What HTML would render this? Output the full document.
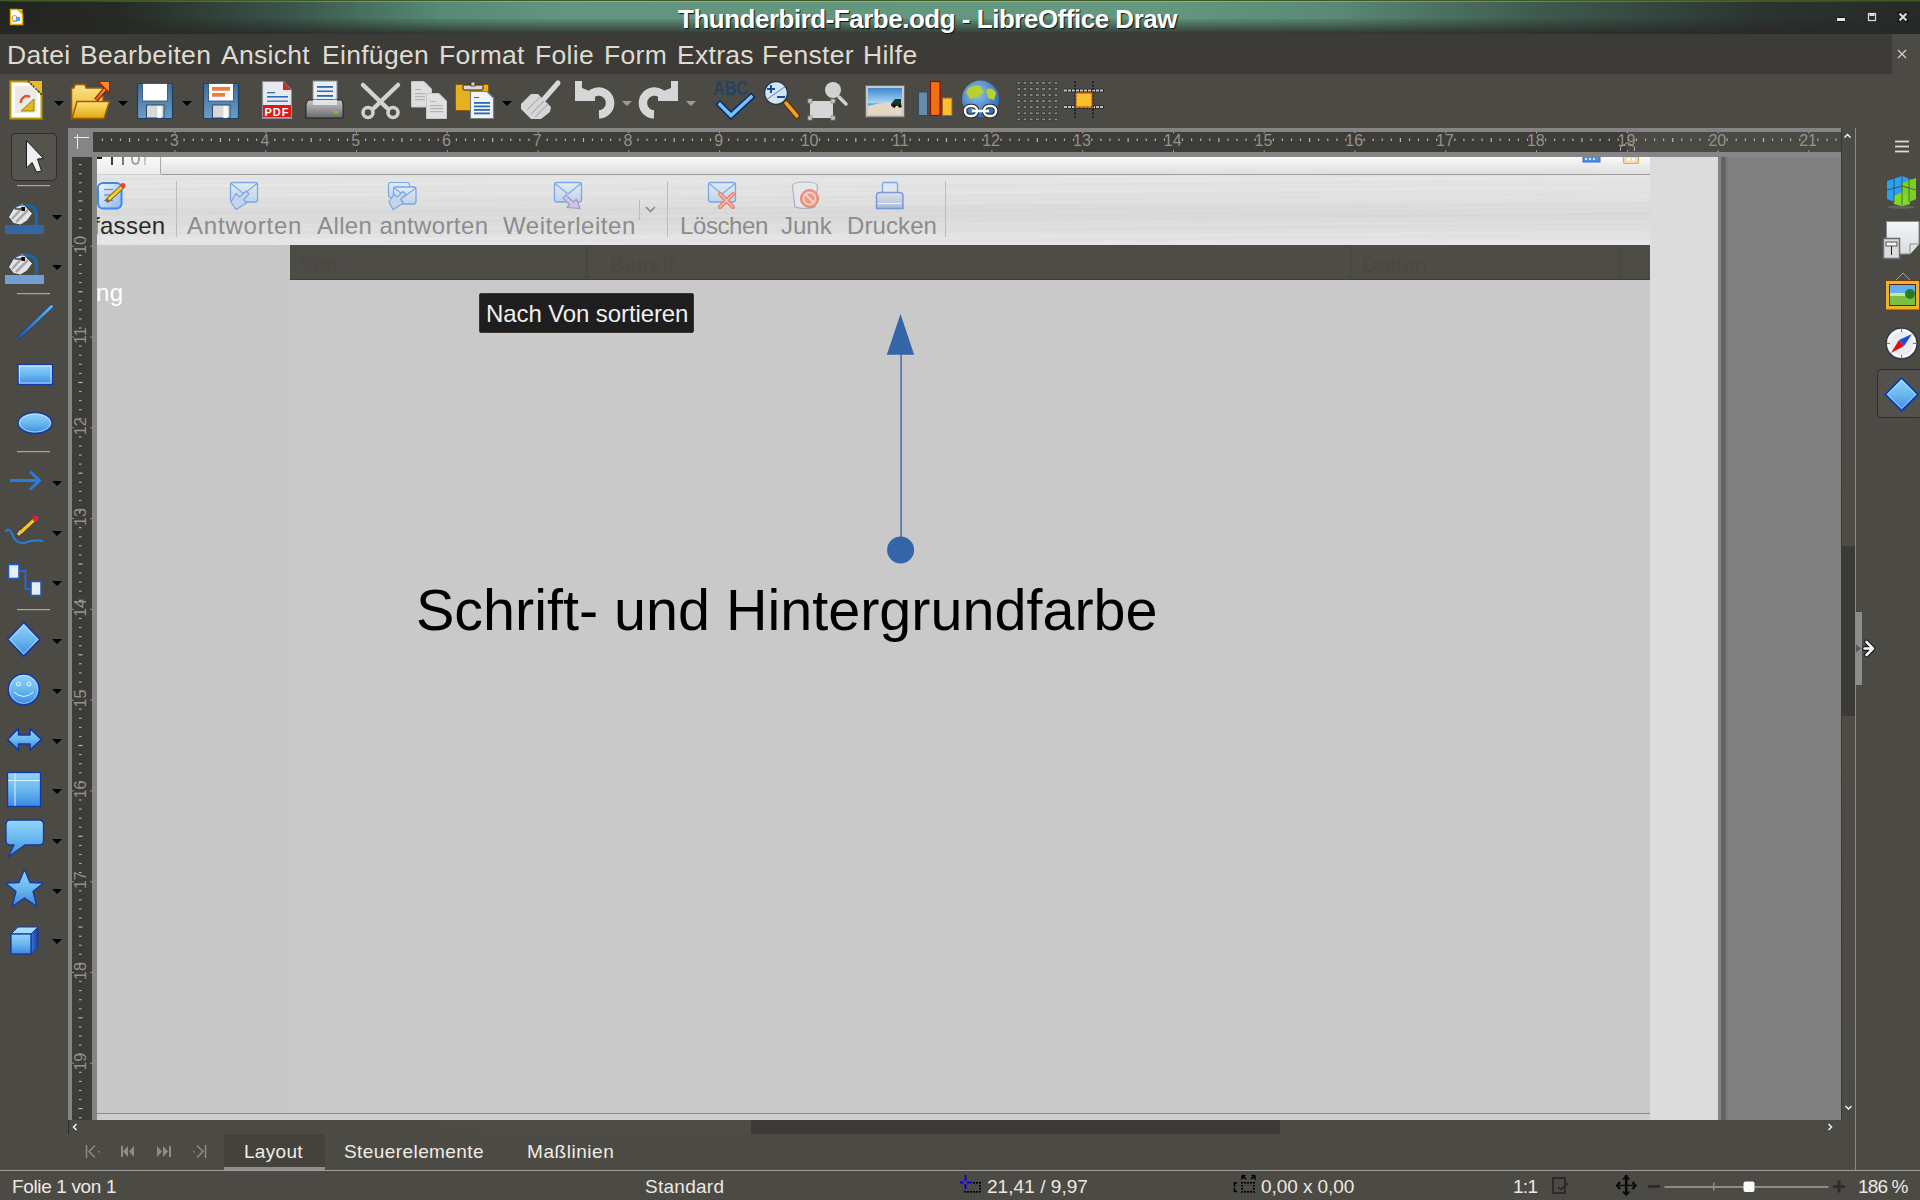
<!DOCTYPE html>
<html><head><meta charset="utf-8">
<style>
*{box-sizing:border-box}
html,body{margin:0;padding:0}
body{width:1920px;height:1200px;overflow:hidden;position:relative;background:#4c4a45;font-family:"Liberation Sans",sans-serif}
.a{position:absolute}
.t{position:absolute;white-space:pre;line-height:1}
#title{left:0;top:0;width:1920px;height:34px;
 background:linear-gradient(90deg,#222420 0px,#262a26 120px,#3a554a 290px,#558a74 440px,#62957f 560px,#64987f 1150px,#5a8a76 1330px,#3e5a4e 1540px,#2c3430 1760px,#262a28 1920px)}
#title .shade{left:0;top:19px;width:1920px;height:15px;background:linear-gradient(180deg,rgba(30,30,30,0.08),rgba(40,40,38,0.85))}
#title .top1{left:0;top:0;width:1920px;height:1px;background:#3f5a20}
#title .top2{left:0;top:1px;width:1920px;height:1px;background:linear-gradient(90deg,rgba(150,170,160,0.1),rgba(150,175,165,0.8) 600px,rgba(150,175,165,0.8) 1200px,rgba(150,170,160,0.1))}
#menubar{left:0;top:34px;width:1892px;height:40px;background:#3c3b37}
.menu{top:42px;font-size:26.5px;letter-spacing:0.3px;color:#dfdbd2}
#toolbar{left:0;top:74px;width:1920px;height:54px;background:#4c4a45}
#frame{left:68px;top:128px;width:1773px;height:992px;background:#858585}
#hruler{left:93px;top:132px;width:1748px;height:20px;background:#3d3c38}
#vruler{left:72px;top:157px;width:20px;height:963px;background:#3d3c38}
#page{left:97px;top:157px;width:1744px;height:963px;background:#808080;overflow:hidden}
#vscroll{left:1841px;top:128px;width:14px;height:992px;background:linear-gradient(180deg,#4c4a45,#4f4b45 40%,#4f4b45 60%,#4c4a45)}
#sep{left:1855px;top:128px;width:1px;height:1042px;background:#8d8a83}
#hscroll{left:68px;top:1120px;width:1773px;height:14px;background:linear-gradient(90deg,#4c4a45,#4f4b44 40%,#4d4a44 70%,#4c4a45)}
#tabbar{left:0;top:1134px;width:1920px;height:36px;background:#4c4a45}
#statusline{left:0;top:1170px;width:1920px;height:1px;background:#a09d96}
#status{left:0;top:1171px;width:1920px;height:29px;background:#4c4a45}
.tbt{top:214px;font-size:24px;letter-spacing:0.4px;color:#8c8c8c}
.st{top:1177px;font-size:19px;color:#ece8e0}
.tab{top:1142px;font-size:19px;color:#f0ece4}
</style></head><body>

<!-- TITLE BAR -->
<div id="title" class="a">
 <div class="a top1"></div><div class="a top2"></div><div class="a shade"></div>
</div>
<div class="t" style="left:678px;top:6px;font-size:26px;letter-spacing:-0.49px;font-weight:bold;color:#fff;text-shadow:1px 1px 1px #111">Thunderbird-Farbe.odg - LibreOffice Draw</div>

<!-- MENU -->
<div id="menubar" class="a"></div>
<div class="t menu" style="left:7px">Datei</div>
<div class="t menu" style="left:80px">Bearbeiten</div>
<div class="t menu" style="left:221px">Ansicht</div>
<div class="t menu" style="left:322px">Einfügen</div>
<div class="t menu" style="left:439px">Format</div>
<div class="t menu" style="left:535px">Folie</div>
<div class="t menu" style="left:604px">Form</div>
<div class="t menu" style="left:677px">Extras</div>
<div class="t menu" style="left:762px">Fenster</div>
<div class="t menu" style="left:863px">Hilfe</div>

<!-- TOOLBAR -->
<div id="toolbar" class="a"></div>
<svg class="a" style="left:0;top:74px" width="1120" height="54" viewBox="0 74 1120 54">
<defs>
 <linearGradient id="gGold" x1="0" y1="0" x2="0" y2="1"><stop offset="0" stop-color="#ffe27a"/><stop offset="1" stop-color="#e0a810"/></linearGradient>
 <linearGradient id="gFold" x1="0" y1="0" x2="0" y2="1"><stop offset="0" stop-color="#fde48a"/><stop offset="1" stop-color="#e8b020"/></linearGradient>
 <linearGradient id="gSave" x1="0" y1="0" x2="0" y2="1"><stop offset="0" stop-color="#3f6f9c"/><stop offset="1" stop-color="#6a9cc8"/></linearGradient>
 <linearGradient id="gOr" x1="0" y1="0" x2="0" y2="1"><stop offset="0" stop-color="#ffa050"/><stop offset="1" stop-color="#e05a00"/></linearGradient>
 <linearGradient id="gSky" x1="0" y1="0" x2="0" y2="1"><stop offset="0" stop-color="#3a88d0"/><stop offset="0.55" stop-color="#a8d4f4"/><stop offset="0.6" stop-color="#48a8e0"/><stop offset="1" stop-color="#e8dcc8"/></linearGradient>
 <radialGradient id="gGlobe" cx="0.4" cy="0.35" r="0.7"><stop offset="0" stop-color="#8cc4f0"/><stop offset="1" stop-color="#2a64b0"/></radialGradient>
 <linearGradient id="gPr" x1="0" y1="0" x2="0" y2="1"><stop offset="0" stop-color="#c8c8c8"/><stop offset="1" stop-color="#6a6a6a"/></linearGradient>
</defs>
<!-- 1 Draw doc -->
<path d="M10.5 81.5 H29 L41.5 94 V118.5 H10.5 Z" fill="#fff" stroke="#c09a00" stroke-width="2"/>
<rect x="15" y="86" width="22" height="27" fill="#eceae6"/>
<path d="M29 81 L42 81 L42 94 Z" fill="#e8bc20"/>
<path d="M28 81 L42 95" stroke="#403a20" stroke-width="1.5" stroke-dasharray="2 1.5"/>
<path d="M21 103 A6 6 0 0 1 30 97" stroke="#d06030" stroke-width="2.5" fill="none"/>
<path d="M21 111 L34 99 V111 Z" fill="#e0b820" stroke="#a08000" stroke-width="1"/>
<path d="M54 101 H64 L59 106 Z" fill="#000"/>
<!-- 2 Open -->
<path d="M71.5 88 H74 L75 84.5 H85 L86 88 H103 V118.5 H71.5 Z" fill="url(#gFold)" stroke="#a05a00" stroke-width="1.5"/>
<path d="M77 101.5 H109.5 L104 118.5 H72 Z" fill="url(#gGold)" stroke="#a05a00" stroke-width="1.5"/>
<path d="M96 100 L106 88" stroke="#7a1a00" stroke-width="4.5"/>
<path d="M96 100 L106 88" stroke="url(#gOr)" stroke-width="2.5"/>
<path d="M98 81.5 H109.5 V93 Z" fill="#ff8a30" stroke="#a01800" stroke-width="1.2"/>
<path d="M118 101 H128 L123 106 Z" fill="#000"/>
<!-- 3 Save -->
<rect x="137.5" y="83.5" width="35" height="35" rx="1.5" fill="url(#gSave)" stroke="#1e3e60" stroke-width="1.2"/>
<rect x="142.5" y="83.5" width="25" height="17.5" fill="#fff" stroke="#2a4a6a" stroke-width="0.8"/>
<rect x="146.5" y="105" width="17.5" height="13" fill="#d8d8d8" stroke="#2a4a6a" stroke-width="1"/>
<rect x="157.5" y="106" width="4" height="12" fill="#fff"/>
<path d="M182 101 H192 L187 106 Z" fill="#000"/>
<!-- 4 Save as -->
<rect x="203.5" y="83.5" width="35" height="35" rx="1.5" fill="url(#gSave)" stroke="#1e3e60" stroke-width="1.2"/>
<rect x="208.5" y="83.5" width="25" height="17.5" fill="#fff" stroke="#2a4a6a" stroke-width="0.8"/>
<rect x="212" y="87" width="18" height="2.5" fill="#f08020"/><rect x="212" y="89.5" width="18" height="1" fill="#e03030"/>
<rect x="212" y="93" width="13" height="2.5" fill="#f08020"/><rect x="212" y="95.5" width="13" height="1" fill="#e03030"/>
<rect x="212.5" y="105" width="17.5" height="13" fill="#d8d8d8" stroke="#2a4a6a" stroke-width="1"/>
<rect x="223.5" y="106" width="4" height="12" fill="#fff"/>
<!-- 5 PDF -->
<path d="M262.5 81.5 H283 L291.5 90 V118.5 H262.5 Z" fill="#e6eaee" stroke="#8a9098" stroke-width="1.2"/>
<path d="M283 81.5 L291.5 90 H283 Z" fill="#e02020"/>
<rect x="267" y="92" width="8" height="1.3" fill="#3070b0"/>
<rect x="267" y="96" width="21" height="1.6" fill="#3070b0"/>
<rect x="267" y="100.5" width="21" height="1.3" fill="#3070b0"/>
<rect x="263" y="105" width="28" height="12.5" fill="#e01818"/>
<text x="277" y="116" font-family="Liberation Sans" font-weight="bold" font-size="11" fill="#fff" text-anchor="middle" letter-spacing="1">PDF</text>
<!-- 6 Print -->
<rect x="313" y="81" width="24" height="23" fill="#e8eef4" stroke="#8a9098" stroke-width="1"/>
<rect x="317" y="86" width="16" height="1.8" fill="#2a6ab0"/>
<rect x="317" y="90.5" width="16" height="1.5" fill="#2a6ab0"/>
<rect x="317" y="95" width="16" height="1.8" fill="#2a6ab0"/>
<rect x="317" y="99.5" width="16" height="1.5" fill="#2a6ab0"/>
<path d="M306 104 L308 100 H342 L343 104 V118 H306 Z" fill="url(#gPr)" stroke="#202020" stroke-width="1"/>
<rect x="313" y="100" width="24" height="5" fill="#e0e4e8"/>
<rect x="334" y="111" width="4" height="2.5" fill="#6ad020"/>
<!-- 7 Cut (disabled) -->
<g stroke="#d2d2d2" fill="none" stroke-linecap="round">
<path d="M363 85 L387 108" stroke-width="4.5"/><path d="M398 85 L374 108" stroke-width="4.5"/>
<circle cx="368" cy="112.5" r="5" stroke-width="3.6"/><circle cx="393" cy="112.5" r="5" stroke-width="3.6"/>
</g>
<!-- 8 Copy -->
<path d="M411.5 81.5 H424 L431.5 89 V107 H411.5 Z" fill="#dedede" stroke="#c8c8c8" stroke-width="1"/>
<path d="M426.5 93.5 H439 L446.5 101 V118.5 H426.5 Z" fill="#e0e0e0" stroke="#c8c8c8" stroke-width="1"/>
<g fill="#b4b4b4"><rect x="415" y="89" width="6" height="1"/><rect x="415" y="93" width="10" height="1.2"/><rect x="415" y="96" width="10" height="1.2"/><rect x="415" y="99" width="10" height="1.2"/>
<rect x="430" y="101" width="6" height="1"/><rect x="430" y="105" width="13" height="1.2"/><rect x="430" y="108" width="13" height="1.2"/><rect x="430" y="111" width="13" height="1.2"/></g>
<!-- 9 Paste -->
<rect x="455.5" y="84.5" width="33" height="26" rx="1" fill="#e6b020" stroke="#8a5a00" stroke-width="1"/>
<rect x="463" y="85" width="20" height="5" rx="1" fill="#d8d8d8" stroke="#202020" stroke-width="1"/>
<rect x="471" y="82" width="4" height="4" fill="#d0d0d0" stroke="#303030" stroke-width="0.8"/>
<path d="M470.5 91.5 H487 L493.5 98 V118.5 H470.5 Z" fill="#f0f4f8" stroke="#7a8088" stroke-width="1.2"/>
<g fill="#2a6ab0"><rect x="474" y="97" width="5" height="1"/><rect x="474" y="102" width="16" height="1.8"/><rect x="474" y="105.5" width="16" height="1.8"/><rect x="474" y="109" width="16" height="1.8"/><rect x="474" y="112.5" width="16" height="1.8"/></g>
<path d="M502 101 H512 L507 106 Z" fill="#000"/>
<!-- 10 Clone brush -->
<path d="M558 83 L544 99" stroke="#d8d8d8" stroke-width="5" stroke-linecap="round"/>
<path d="M521 104 L531 94 L538 94 L551 107 L550 112 L541 119 L531 119 L521 109 Z" fill="#d6d6d6"/>
<g stroke="#b4b4b4" stroke-width="1.2"><path d="M527 110 L540 97"/><path d="M531 114 L544 101"/><path d="M535 117 L548 104"/></g>
<!-- 11 Undo (disabled) -->
<g id="undoG">
<path d="M575 81 H582 V94 H595 V101 H575 Z" fill="#d6d6d6"/>
<path d="M587.5 100 A 11.5 11.5 0 1 1 599 114.5" stroke="#d6d6d6" stroke-width="8.5" fill="none"/><path d="M582 88 L592 92 L590 97 L582 97 Z" fill="#d6d6d6"/>
</g>
<path d="M622 101 H632 L627 106 Z" fill="#a09d96"/>
<!-- 12 Redo (disabled) -->
<g transform="translate(1253,0) scale(-1,1)">
<path d="M575 81 H582 V94 H595 V101 H575 Z" fill="#d6d6d6"/>
<path d="M587.5 100 A 11.5 11.5 0 1 1 599 114.5" stroke="#d6d6d6" stroke-width="8.5" fill="none"/><path d="M582 88 L592 92 L590 97 L582 97 Z" fill="#d6d6d6"/>
</g>
<path d="M686 101 H696 L691 106 Z" fill="#a09d96"/>
<!-- 13 Spell -->
<text x="730.5" y="95" font-family="Liberation Sans" font-weight="bold" font-size="19.5" fill="#27425c" text-anchor="middle" textLength="35" lengthAdjust="spacingAndGlyphs">ABC</text>
<path d="M720 104.5 L731 115.5 L751 97" stroke="#0a2a6a" stroke-width="6.5" fill="none" stroke-linejoin="miter" stroke-linecap="square"/>
<path d="M720 104.5 L731 115.5 L751 97" stroke="#78c0f8" stroke-width="3.5" fill="none" stroke-linejoin="miter" stroke-linecap="square"/>
<!-- 14 Zoom -->
<path d="M786 103 L797 116" stroke="#603000" stroke-width="6" stroke-linecap="round"/>
<path d="M786 103 L797 116" stroke="#f0a030" stroke-width="3.5" stroke-linecap="round"/>
<circle cx="776" cy="93" r="11.5" fill="#d0e6f8" stroke="#303840" stroke-width="1.5"/>
<path d="M766 100 L786 86" stroke="#506070" stroke-width="0.8"/>
<path d="M767 89 H775 M771 85 V93" stroke="#1a4a9a" stroke-width="2"/>
<path d="M777 97 H785" stroke="#1a4a9a" stroke-width="2"/>
<!-- 15 Zoom-select (disabled) -->
<rect x="810" y="101" width="23" height="17" fill="#d6d6d6"/>
<g fill="#c8c8c8" stroke="#8a8a8a" stroke-width="0.8"><rect x="808" y="99" width="4" height="4"/><rect x="831" y="99" width="4" height="4"/><rect x="808" y="116" width="4" height="4"/><rect x="831" y="116" width="4" height="4"/></g>
<path d="M839 97 L846 104" stroke="#d0d0d0" stroke-width="3.5" stroke-linecap="round"/>
<circle cx="833" cy="90" r="8" fill="#d2d2d2"/>
<!-- 16 Image -->
<rect x="865.5" y="85.5" width="39" height="31.5" fill="#c8c8c8" stroke="#6a6a6a" stroke-width="1"/>
<rect x="868" y="88" width="34" height="26.5" fill="url(#gSky)"/>
<path d="M868 106 Q 885 100 902 104 V114.5 H868 Z" fill="#e6d6c4"/>
<path d="M891 104 L895 99 H901 V106 H891 Z" fill="#103a28"/>
<circle cx="894" cy="106" r="1.8" fill="#101010"/><circle cx="900" cy="106" r="1.8" fill="#101010"/>
<!-- 17 Chart -->
<path d="M913.5 81 V118.5 H952" stroke="#3a4a5a" stroke-width="1" fill="none"/>
<rect x="918.5" y="92" width="9" height="23.5" fill="#6a8aaa" stroke="#2a4a6a" stroke-width="1"/>
<rect x="930.5" y="81.5" width="9.5" height="34" fill="#f07010" stroke="#8a1010" stroke-width="1.2"/>
<rect x="942.5" y="98" width="9.5" height="17.5" fill="#f8c030" stroke="#b06010" stroke-width="1"/>
<!-- 18 Globe link -->
<circle cx="980.5" cy="99" r="18.5" fill="url(#gGlobe)"/>
<path d="M966 92 Q 970 84 980 86 L984 92 L978 97 L970 99 Z" fill="#b8d030"/>
<path d="M986 90 Q 992 86 996 93 L994 100 L988 98 Z" fill="#b8d030"/>
<path d="M970 103 L976 108 L972 112 Z" fill="#a0c030"/>
<g fill="none" stroke="#202830" stroke-width="4.5"><rect x="965" y="106" width="12" height="10" rx="5"/><rect x="984" y="106" width="12" height="10" rx="5"/></g>
<g fill="none" stroke="#ffffff" stroke-width="2.5"><rect x="965" y="106" width="12" height="10" rx="5"/><rect x="984" y="106" width="12" height="10" rx="5"/><path d="M972 111 H989"/></g>
<!-- 19 Grid -->
<g><rect x="1017.0" y="81.5" width="3.6" height="2.6" fill="#8c8c8c" stroke="#353535" stroke-width="0.8"/><rect x="1017.0" y="87.6" width="3.6" height="2.6" fill="#8c8c8c" stroke="#353535" stroke-width="0.8"/><rect x="1017.0" y="93.7" width="3.6" height="2.6" fill="#8c8c8c" stroke="#353535" stroke-width="0.8"/><rect x="1017.0" y="99.8" width="3.6" height="2.6" fill="#8c8c8c" stroke="#353535" stroke-width="0.8"/><rect x="1017.0" y="105.9" width="3.6" height="2.6" fill="#8c8c8c" stroke="#353535" stroke-width="0.8"/><rect x="1017.0" y="112.0" width="3.6" height="2.6" fill="#8c8c8c" stroke="#353535" stroke-width="0.8"/><rect x="1017.0" y="118.1" width="3.6" height="2.6" fill="#8c8c8c" stroke="#353535" stroke-width="0.8"/><rect x="1023.2" y="81.5" width="3.6" height="2.6" fill="#8c8c8c" stroke="#353535" stroke-width="0.8"/><rect x="1023.2" y="87.6" width="3.6" height="2.6" fill="#8c8c8c" stroke="#353535" stroke-width="0.8"/><rect x="1023.2" y="93.7" width="3.6" height="2.6" fill="#8c8c8c" stroke="#353535" stroke-width="0.8"/><rect x="1023.2" y="99.8" width="3.6" height="2.6" fill="#8c8c8c" stroke="#353535" stroke-width="0.8"/><rect x="1023.2" y="105.9" width="3.6" height="2.6" fill="#8c8c8c" stroke="#353535" stroke-width="0.8"/><rect x="1023.2" y="112.0" width="3.6" height="2.6" fill="#8c8c8c" stroke="#353535" stroke-width="0.8"/><rect x="1023.2" y="118.1" width="3.6" height="2.6" fill="#8c8c8c" stroke="#353535" stroke-width="0.8"/><rect x="1029.4" y="81.5" width="3.6" height="2.6" fill="#8c8c8c" stroke="#353535" stroke-width="0.8"/><rect x="1029.4" y="87.6" width="3.6" height="2.6" fill="#8c8c8c" stroke="#353535" stroke-width="0.8"/><rect x="1029.4" y="93.7" width="3.6" height="2.6" fill="#8c8c8c" stroke="#353535" stroke-width="0.8"/><rect x="1029.4" y="99.8" width="3.6" height="2.6" fill="#8c8c8c" stroke="#353535" stroke-width="0.8"/><rect x="1029.4" y="105.9" width="3.6" height="2.6" fill="#8c8c8c" stroke="#353535" stroke-width="0.8"/><rect x="1029.4" y="112.0" width="3.6" height="2.6" fill="#8c8c8c" stroke="#353535" stroke-width="0.8"/><rect x="1029.4" y="118.1" width="3.6" height="2.6" fill="#8c8c8c" stroke="#353535" stroke-width="0.8"/><rect x="1035.6" y="81.5" width="3.6" height="2.6" fill="#8c8c8c" stroke="#353535" stroke-width="0.8"/><rect x="1035.6" y="87.6" width="3.6" height="2.6" fill="#8c8c8c" stroke="#353535" stroke-width="0.8"/><rect x="1035.6" y="93.7" width="3.6" height="2.6" fill="#8c8c8c" stroke="#353535" stroke-width="0.8"/><rect x="1035.6" y="99.8" width="3.6" height="2.6" fill="#8c8c8c" stroke="#353535" stroke-width="0.8"/><rect x="1035.6" y="105.9" width="3.6" height="2.6" fill="#8c8c8c" stroke="#353535" stroke-width="0.8"/><rect x="1035.6" y="112.0" width="3.6" height="2.6" fill="#8c8c8c" stroke="#353535" stroke-width="0.8"/><rect x="1035.6" y="118.1" width="3.6" height="2.6" fill="#8c8c8c" stroke="#353535" stroke-width="0.8"/><rect x="1041.8" y="81.5" width="3.6" height="2.6" fill="#8c8c8c" stroke="#353535" stroke-width="0.8"/><rect x="1041.8" y="87.6" width="3.6" height="2.6" fill="#8c8c8c" stroke="#353535" stroke-width="0.8"/><rect x="1041.8" y="93.7" width="3.6" height="2.6" fill="#8c8c8c" stroke="#353535" stroke-width="0.8"/><rect x="1041.8" y="99.8" width="3.6" height="2.6" fill="#8c8c8c" stroke="#353535" stroke-width="0.8"/><rect x="1041.8" y="105.9" width="3.6" height="2.6" fill="#8c8c8c" stroke="#353535" stroke-width="0.8"/><rect x="1041.8" y="112.0" width="3.6" height="2.6" fill="#8c8c8c" stroke="#353535" stroke-width="0.8"/><rect x="1041.8" y="118.1" width="3.6" height="2.6" fill="#8c8c8c" stroke="#353535" stroke-width="0.8"/><rect x="1048.0" y="81.5" width="3.6" height="2.6" fill="#8c8c8c" stroke="#353535" stroke-width="0.8"/><rect x="1048.0" y="87.6" width="3.6" height="2.6" fill="#8c8c8c" stroke="#353535" stroke-width="0.8"/><rect x="1048.0" y="93.7" width="3.6" height="2.6" fill="#8c8c8c" stroke="#353535" stroke-width="0.8"/><rect x="1048.0" y="99.8" width="3.6" height="2.6" fill="#8c8c8c" stroke="#353535" stroke-width="0.8"/><rect x="1048.0" y="105.9" width="3.6" height="2.6" fill="#8c8c8c" stroke="#353535" stroke-width="0.8"/><rect x="1048.0" y="112.0" width="3.6" height="2.6" fill="#8c8c8c" stroke="#353535" stroke-width="0.8"/><rect x="1048.0" y="118.1" width="3.6" height="2.6" fill="#8c8c8c" stroke="#353535" stroke-width="0.8"/><rect x="1054.2" y="81.5" width="3.6" height="2.6" fill="#8c8c8c" stroke="#353535" stroke-width="0.8"/><rect x="1054.2" y="87.6" width="3.6" height="2.6" fill="#8c8c8c" stroke="#353535" stroke-width="0.8"/><rect x="1054.2" y="93.7" width="3.6" height="2.6" fill="#8c8c8c" stroke="#353535" stroke-width="0.8"/><rect x="1054.2" y="99.8" width="3.6" height="2.6" fill="#8c8c8c" stroke="#353535" stroke-width="0.8"/><rect x="1054.2" y="105.9" width="3.6" height="2.6" fill="#8c8c8c" stroke="#353535" stroke-width="0.8"/><rect x="1054.2" y="112.0" width="3.6" height="2.6" fill="#8c8c8c" stroke="#353535" stroke-width="0.8"/><rect x="1054.2" y="118.1" width="3.6" height="2.6" fill="#8c8c8c" stroke="#353535" stroke-width="0.8"/></g>
<!-- 20 Snap -->
<g stroke="#2a2a2a" stroke-width="3.5"><path d="M1064 90.5 H1104"/><path d="M1064 107 H1104"/></g><g stroke="#c0c0c0" stroke-width="2" stroke-dasharray="3 1"><path d="M1064 90.5 H1104"/><path d="M1064 107 H1104"/></g>
<g stroke="#1a2a3a" stroke-width="2" stroke-dasharray="2 1.5"><path d="M1075 81 V119"/><path d="M1093 81 V119"/></g>
<rect x="1076" y="93" width="16" height="14" fill="#f8c030" stroke="#c05a00" stroke-width="1.2"/>
</svg>


<!-- LEFT TOOLBAR -->
<svg class="a" style="left:0;top:128px" width="68" height="840" viewBox="0 128 68 840">
<defs>
 <linearGradient id="gB" x1="0" y1="0" x2="0" y2="1"><stop offset="0" stop-color="#94d4fa"/><stop offset="0.5" stop-color="#6ab8ee"/><stop offset="1" stop-color="#3a88e4"/></linearGradient>
 <linearGradient id="gLn" x1="0" y1="1" x2="1" y2="0"><stop offset="0" stop-color="#1a58b0"/><stop offset="1" stop-color="#5ab4fa"/></linearGradient>
 <linearGradient id="gSide" x1="0" y1="0" x2="1" y2="0"><stop offset="0" stop-color="#3a7ad8"/><stop offset="1" stop-color="#1a3a98"/></linearGradient>
</defs>
<!-- select -->
<rect x="11.5" y="133.5" width="45" height="47" rx="4.5" fill="#55534e" stroke="#2f2e2b" stroke-width="1"/>
<path d="M26.5 140.5 V168 L32 162.5 L36.5 172 L41.5 171 L37.5 159 L43.5 158.5 Z" fill="#eef1f4" stroke="#1a1a1a" stroke-width="1" stroke-linejoin="miter"/>
<rect x="17" y="185" width="33" height="1.2" fill="#aaa69e"/>
<!-- fill 1 -->
<g id="bucket">
<path d="M25 205.5 Q 36.5 205 36.5 215 V225" stroke="#1a66ac" stroke-width="3.2" fill="none"/>
<path d="M8.5 217 L14 207.5 L22.5 203 L32.5 213.5 L27 221 L20.5 225 L13.5 223.5 Z" fill="#e4e4e4" stroke="#3a4048" stroke-width="1"/>
<path d="M12 219 L23 207 M16 222 L28 210" stroke="#a8a8a8" stroke-width="2.5"/>
<path d="M13.5 209 Q 18 204.5 24 205" stroke="#2a5a90" stroke-width="1.3" fill="none"/>
<rect x="21.5" y="207" width="3.5" height="4" fill="#0a0a1a"/>
<path d="M15 209 L22 209" stroke="#1a1a2a" stroke-width="1.2"/>
</g>
<rect x="5" y="225" width="39" height="9" fill="#3465a4"/>
<path d="M52 215 H62 L57 220 Z" fill="#000"/>
<!-- fill 2 -->
<use href="#bucket" y="50"/>
<rect x="5" y="275" width="39" height="9" fill="#729fcf"/>
<path d="M52 265 H62 L57 270 Z" fill="#000"/>
<rect x="17" y="293" width="33" height="1.2" fill="#aaa69e"/>
<!-- line -->
<path d="M19.5 337 L51.5 306.5" stroke="#12306a" stroke-width="4" stroke-linecap="round" opacity="0.6"/>
<path d="M19.5 337 L51.5 306.5" stroke="url(#gLn)" stroke-width="3" stroke-linecap="round"/>
<!-- rect -->
<rect x="18" y="364.5" width="34.5" height="20" fill="url(#gB)" stroke="#1438a0" stroke-width="1.2"/>
<rect x="19.5" y="366" width="31.5" height="17" fill="none" stroke="#e8f6ff" stroke-width="0.9" opacity="0.8"/>
<!-- ellipse -->
<ellipse cx="35" cy="423" rx="17" ry="10.5" fill="url(#gB)" stroke="#1438a0" stroke-width="1.3"/>
<ellipse cx="35" cy="423" rx="15.5" ry="9" fill="none" stroke="#e8f6ff" stroke-width="0.8" opacity="0.7"/>
<rect x="17" y="451" width="33" height="1.2" fill="#aaa69e"/>
<!-- arrow -->
<path d="M10 480.5 H39" stroke="#2a7ae0" stroke-width="3"/>
<path d="M30 471.5 L39.5 480.5 L30 489.5" stroke="#2a7ae0" stroke-width="3" fill="none"/>
<path d="M52 481 H62 L57 486 Z" fill="#000"/>
<!-- curve/pencil -->
<path d="M5.5 532 Q 8 527 12 533 Q 15 544 24 543 Q 34 539 43 541" stroke="#2a7ad8" stroke-width="2.2" fill="none"/>
<path d="M19 534 L35 519" stroke="#503a10" stroke-width="5" stroke-linecap="round"/>
<path d="M20 533 L34 520" stroke="#f8c820" stroke-width="3.2"/>
<path d="M18 535 L21 531" stroke="#e0c090" stroke-width="3"/>
<circle cx="35.5" cy="518.5" r="3" fill="#e02040"/>
<path d="M52 531 H62 L57 536 Z" fill="#000"/>
<!-- connector -->
<path d="M19 571 H25.5 V589 H31" stroke="#2a6ad0" stroke-width="2" fill="none"/>
<rect x="8.5" y="564.5" width="10.5" height="14" fill="#e8eef4" stroke="#1a5ad0" stroke-width="1.6"/>
<rect x="31" y="581.5" width="10" height="14" fill="#e8eef4" stroke="#1a5ad0" stroke-width="1.6"/>
<path d="M52 581 H62 L57 586 Z" fill="#000"/>
<rect x="17" y="609" width="33" height="1.2" fill="#aaa69e"/>
<!-- diamond -->
<path d="M23.75 622.5 L40 639.4 L23.75 656.3 L7.5 639.4 Z" fill="url(#gB)" stroke="#1438a0" stroke-width="1.5"/>
<path d="M23.75 625 L37.5 639.4 L23.75 653.8 L10 639.4 Z" fill="none" stroke="#e8f6ff" stroke-width="0.8" opacity="0.7"/>
<path d="M52 639 H62 L57 644 Z" fill="#000"/>
<!-- smiley -->
<circle cx="23.75" cy="689.4" r="15.5" fill="url(#gB)" stroke="#1438a0" stroke-width="1.5"/>
<circle cx="23.75" cy="689.4" r="14" fill="none" stroke="#d8f0ff" stroke-width="0.8" opacity="0.6"/>
<g fill="none" stroke="#e8f6ff" stroke-width="1"><circle cx="18.5" cy="684" r="2"/><circle cx="29" cy="684" r="2"/><path d="M14 692 Q 23.75 701 33.5 692"/></g>
<path d="M52 689 H62 L57 694 Z" fill="#000"/>
<!-- double arrow -->
<path d="M7.5 739.4 L18.5 728.5 V735 H30 V728.5 L41.5 739.4 L30 750.3 V744 H18.5 V750.3 Z" fill="url(#gB)" stroke="#1438a0" stroke-width="1.5" stroke-linejoin="round"/>
<path d="M52 739 H62 L57 744 Z" fill="#000"/>
<!-- flowchart -->
<rect x="7.5" y="772.5" width="33" height="34" fill="url(#gB)" stroke="#1438a0" stroke-width="1.3"/>
<path d="M15 773 V806 M8 780.5 H40" stroke="#e8f6ff" stroke-width="0.9"/>
<path d="M52 789 H62 L57 794 Z" fill="#000"/>
<!-- callout -->
<path d="M10 820 H39 Q 43.5 820 43.5 824.5 V840.5 Q 43.5 845 39 845 H25 L8 857 L14 845 H10 Q 6 845 6 840.5 V824.5 Q 6 820 10 820 Z" fill="url(#gB)" stroke="#1438a0" stroke-width="1.3" stroke-linejoin="round"/>
<path d="M52 839 H62 L57 844 Z" fill="#000"/>
<!-- star -->
<path d="M24.5 869.5 L30 882.5 L43.5 883 L33 891.5 L37 906.5 L24.5 898 L12 906.5 L16 891.5 L5.5 883 L19 882.5 Z" fill="url(#gB)" stroke="#1438a0" stroke-width="1.3" stroke-linejoin="round"/>
<path d="M52 889 H62 L57 894 Z" fill="#000"/>
<!-- cube -->
<path d="M11 934 L18 927 H38 L31 934 Z" fill="#a8dcfa" stroke="#1438a0" stroke-width="1"/>
<path d="M31 934 L38 927 V947 L31 954 Z" fill="url(#gSide)" stroke="#1438a0" stroke-width="1"/>
<rect x="11" y="934" width="20" height="20" fill="url(#gB)" stroke="#1438a0" stroke-width="1.3"/>
<path d="M52 939 H62 L57 944 Z" fill="#000"/>
</svg>

<!-- SIDEBAR -->
<svg class="a" style="left:1856px;top:128px" width="64" height="300" viewBox="1856 128 64 300">
<defs>
 <linearGradient id="gB2" x1="0" y1="0" x2="0" y2="1"><stop offset="0" stop-color="#94d4fa"/><stop offset="0.5" stop-color="#6ab8ee"/><stop offset="1" stop-color="#3a88e4"/></linearGradient>
 <linearGradient id="gPg" x1="0" y1="0" x2="0" y2="1"><stop offset="0" stop-color="#f4f6f8"/><stop offset="1" stop-color="#d8dce0"/></linearGradient>
</defs>
<!-- menu -->
<g stroke="#dcdad4" stroke-width="1.8"><path d="M1895 141.5 H1909"/><path d="M1895 146.5 H1909"/><path d="M1895 151.5 H1909"/></g>
<!-- properties cube -->
<ellipse cx="1901" cy="207" rx="14" ry="1.8" fill="#6a6862" opacity="0.8"/>
<path d="M1887 181 L1902 176 L1916 181 V199 L1902 205 L1887 199 Z" fill="#2aa0f0"/>
<path d="M1902 183 L1916 178 V199 L1902 205 Z" fill="#7ad020"/>
<path d="M1894 196 L1902 192 L1910 196 V204 L1902 206 L1894 204 Z" fill="#80d828"/>
<g stroke="#3a3a3a" stroke-width="1" fill="none" opacity="0.7"><path d="M1894 178 V202"/><path d="M1909 178 V202"/><path d="M1887 190 L1902 186 L1916 190"/><path d="M1902 176 V205"/></g>
<!-- styles -->
<path d="M1886.5 221.5 H1919 V244 L1910 254 H1886.5 Z" fill="url(#gPg)" stroke="#8a8e92" stroke-width="1"/>
<path d="M1910 254 V244 H1919" fill="#e0e2e4" stroke="#8a8e92" stroke-width="1"/>
<rect x="1883.5" y="238.5" width="16" height="20" fill="#dcdcdc" stroke="#6a6e74" stroke-width="1.5"/>
<rect x="1886" y="242" width="11" height="4" fill="#f4f4f4" stroke="#303030" stroke-width="0.8"/>
<path d="M1891.5 246 V255" stroke="#202020" stroke-width="1"/>
<!-- gallery -->
<path d="M1896 280 L1903 273 L1910 280" stroke="#9aa4ae" stroke-width="1" fill="none"/>
<rect x="1885.5" y="280.5" width="34" height="29.5" fill="#f0b030" stroke="#7a3a00" stroke-width="1"/>
<rect x="1889" y="284" width="27" height="22" fill="#5a2a00"/>
<rect x="1890" y="285" width="25" height="20" fill="#62b0f0"/>
<rect x="1890" y="295" width="25" height="10" fill="#7ac040"/>
<rect x="1890" y="293" width="25" height="3" fill="#d8e0a0"/>
<circle cx="1910" cy="294" r="5" fill="#2a7a2a"/>
<!-- navigator compass -->
<circle cx="1901.6" cy="343.4" r="15.5" fill="#e8ecf0" stroke="#303840" stroke-width="1.5"/>
<circle cx="1901.6" cy="343.4" r="13" fill="none" stroke="#ffffff" stroke-width="1.5"/>
<path d="M1891 353 L1899 340 L1904 346 Z" fill="#e01010"/>
<path d="M1912 334 L1899 340 L1904 346 Z" fill="#1a4ae0"/>
<g stroke="#606870" stroke-width="1"><path d="M1901.6 329 V332"/><path d="M1901.6 355 V358"/><path d="M1887 343.4 H1890"/><path d="M1913 343.4 H1916"/></g>
<!-- shapes -->
<rect x="1877.5" y="369.5" width="46" height="48" rx="4" fill="#53514c" stroke="#2e2d2a" stroke-width="1"/>
<path d="M1901.6 378 L1918 394.4 L1901.6 410.8 L1885.2 394.4 Z" fill="url(#gB2)" stroke="#1438a0" stroke-width="1.6"/>
<path d="M1901.6 380.5 L1915.5 394.4 L1901.6 408.3 L1887.7 394.4 Z" fill="none" stroke="#e8f6ff" stroke-width="0.8" opacity="0.7"/>
</svg>

<!-- CANVAS -->
<div id="frame" class="a"></div>
<div id="hruler" class="a"></div>
<div class="a" style="left:74px;top:137px;width:15px;height:1px;background:#f0f0f0"></div><div class="a" style="left:77px;top:134px;width:1px;height:15px;background:#f0f0f0"></div>
<div id="vruler" class="a"></div>
<svg class="a" style="left:93px;top:132px" width="1748" height="20" viewBox="93 132 1748 20">
<rect x="1627" y="132" width="214" height="20" fill="#4b4944"/>
<rect x="101.8" y="138.5" width="1.2" height="2.5" fill="#b0aea8"/>
<rect x="110.9" y="138.5" width="1.2" height="2.5" fill="#b0aea8"/>
<rect x="119.9" y="138.5" width="1.2" height="2.5" fill="#b0aea8"/>
<rect x="129.0" y="138" width="1.2" height="4" fill="#b8b6b0"/>
<rect x="138.1" y="138.5" width="1.2" height="2.5" fill="#b0aea8"/>
<rect x="147.2" y="138.5" width="1.2" height="2.5" fill="#b0aea8"/>
<rect x="156.2" y="138.5" width="1.2" height="2.5" fill="#b0aea8"/>
<rect x="165.3" y="138.5" width="1.2" height="2.5" fill="#b0aea8"/>
<rect x="174.5" y="132" width="1" height="1.3" fill="#b8b6b0"/><rect x="174.5" y="150.3" width="1" height="1.5" fill="#b8b6b0"/>
<rect x="183.5" y="138.5" width="1.2" height="2.5" fill="#b0aea8"/>
<rect x="192.6" y="138.5" width="1.2" height="2.5" fill="#b0aea8"/>
<rect x="201.6" y="138.5" width="1.2" height="2.5" fill="#b0aea8"/>
<rect x="210.7" y="138.5" width="1.2" height="2.5" fill="#b0aea8"/>
<rect x="219.8" y="138" width="1.2" height="4" fill="#b8b6b0"/>
<rect x="228.9" y="138.5" width="1.2" height="2.5" fill="#b0aea8"/>
<rect x="237.9" y="138.5" width="1.2" height="2.5" fill="#b0aea8"/>
<rect x="247.0" y="138.5" width="1.2" height="2.5" fill="#b0aea8"/>
<rect x="256.1" y="138.5" width="1.2" height="2.5" fill="#b0aea8"/>
<rect x="265.3" y="132" width="1" height="1.3" fill="#b8b6b0"/><rect x="265.3" y="150.3" width="1" height="1.5" fill="#b8b6b0"/>
<rect x="274.2" y="138.5" width="1.2" height="2.5" fill="#b0aea8"/>
<rect x="283.3" y="138.5" width="1.2" height="2.5" fill="#b0aea8"/>
<rect x="292.4" y="138.5" width="1.2" height="2.5" fill="#b0aea8"/>
<rect x="301.5" y="138.5" width="1.2" height="2.5" fill="#b0aea8"/>
<rect x="310.6" y="138" width="1.2" height="4" fill="#b8b6b0"/>
<rect x="319.6" y="138.5" width="1.2" height="2.5" fill="#b0aea8"/>
<rect x="328.7" y="138.5" width="1.2" height="2.5" fill="#b0aea8"/>
<rect x="337.8" y="138.5" width="1.2" height="2.5" fill="#b0aea8"/>
<rect x="346.9" y="138.5" width="1.2" height="2.5" fill="#b0aea8"/>
<rect x="356.0" y="132" width="1" height="1.3" fill="#b8b6b0"/><rect x="356.0" y="150.3" width="1" height="1.5" fill="#b8b6b0"/>
<rect x="365.0" y="138.5" width="1.2" height="2.5" fill="#b0aea8"/>
<rect x="374.1" y="138.5" width="1.2" height="2.5" fill="#b0aea8"/>
<rect x="383.2" y="138.5" width="1.2" height="2.5" fill="#b0aea8"/>
<rect x="392.2" y="138.5" width="1.2" height="2.5" fill="#b0aea8"/>
<rect x="401.3" y="138" width="1.2" height="4" fill="#b8b6b0"/>
<rect x="410.4" y="138.5" width="1.2" height="2.5" fill="#b0aea8"/>
<rect x="419.5" y="138.5" width="1.2" height="2.5" fill="#b0aea8"/>
<rect x="428.6" y="138.5" width="1.2" height="2.5" fill="#b0aea8"/>
<rect x="437.6" y="138.5" width="1.2" height="2.5" fill="#b0aea8"/>
<rect x="446.8" y="132" width="1" height="1.3" fill="#b8b6b0"/><rect x="446.8" y="150.3" width="1" height="1.5" fill="#b8b6b0"/>
<rect x="455.8" y="138.5" width="1.2" height="2.5" fill="#b0aea8"/>
<rect x="464.9" y="138.5" width="1.2" height="2.5" fill="#b0aea8"/>
<rect x="473.9" y="138.5" width="1.2" height="2.5" fill="#b0aea8"/>
<rect x="483.0" y="138.5" width="1.2" height="2.5" fill="#b0aea8"/>
<rect x="492.1" y="138" width="1.2" height="4" fill="#b8b6b0"/>
<rect x="501.2" y="138.5" width="1.2" height="2.5" fill="#b0aea8"/>
<rect x="510.2" y="138.5" width="1.2" height="2.5" fill="#b0aea8"/>
<rect x="519.3" y="138.5" width="1.2" height="2.5" fill="#b0aea8"/>
<rect x="528.4" y="138.5" width="1.2" height="2.5" fill="#b0aea8"/>
<rect x="537.6" y="132" width="1" height="1.3" fill="#b8b6b0"/><rect x="537.6" y="150.3" width="1" height="1.5" fill="#b8b6b0"/>
<rect x="546.6" y="138.5" width="1.2" height="2.5" fill="#b0aea8"/>
<rect x="555.6" y="138.5" width="1.2" height="2.5" fill="#b0aea8"/>
<rect x="564.7" y="138.5" width="1.2" height="2.5" fill="#b0aea8"/>
<rect x="573.8" y="138.5" width="1.2" height="2.5" fill="#b0aea8"/>
<rect x="582.9" y="138" width="1.2" height="4" fill="#b8b6b0"/>
<rect x="591.9" y="138.5" width="1.2" height="2.5" fill="#b0aea8"/>
<rect x="601.0" y="138.5" width="1.2" height="2.5" fill="#b0aea8"/>
<rect x="610.1" y="138.5" width="1.2" height="2.5" fill="#b0aea8"/>
<rect x="619.2" y="138.5" width="1.2" height="2.5" fill="#b0aea8"/>
<rect x="628.3" y="132" width="1" height="1.3" fill="#b8b6b0"/><rect x="628.3" y="150.3" width="1" height="1.5" fill="#b8b6b0"/>
<rect x="637.3" y="138.5" width="1.2" height="2.5" fill="#b0aea8"/>
<rect x="646.4" y="138.5" width="1.2" height="2.5" fill="#b0aea8"/>
<rect x="655.5" y="138.5" width="1.2" height="2.5" fill="#b0aea8"/>
<rect x="664.6" y="138.5" width="1.2" height="2.5" fill="#b0aea8"/>
<rect x="673.6" y="138" width="1.2" height="4" fill="#b8b6b0"/>
<rect x="682.7" y="138.5" width="1.2" height="2.5" fill="#b0aea8"/>
<rect x="691.8" y="138.5" width="1.2" height="2.5" fill="#b0aea8"/>
<rect x="700.9" y="138.5" width="1.2" height="2.5" fill="#b0aea8"/>
<rect x="709.9" y="138.5" width="1.2" height="2.5" fill="#b0aea8"/>
<rect x="719.1" y="132" width="1" height="1.3" fill="#b8b6b0"/><rect x="719.1" y="150.3" width="1" height="1.5" fill="#b8b6b0"/>
<rect x="728.1" y="138.5" width="1.2" height="2.5" fill="#b0aea8"/>
<rect x="737.2" y="138.5" width="1.2" height="2.5" fill="#b0aea8"/>
<rect x="746.3" y="138.5" width="1.2" height="2.5" fill="#b0aea8"/>
<rect x="755.3" y="138.5" width="1.2" height="2.5" fill="#b0aea8"/>
<rect x="764.4" y="138" width="1.2" height="4" fill="#b8b6b0"/>
<rect x="773.5" y="138.5" width="1.2" height="2.5" fill="#b0aea8"/>
<rect x="782.6" y="138.5" width="1.2" height="2.5" fill="#b0aea8"/>
<rect x="791.6" y="138.5" width="1.2" height="2.5" fill="#b0aea8"/>
<rect x="800.7" y="138.5" width="1.2" height="2.5" fill="#b0aea8"/>
<rect x="809.9" y="132" width="1" height="1.3" fill="#b8b6b0"/><rect x="809.9" y="150.3" width="1" height="1.5" fill="#b8b6b0"/>
<rect x="818.9" y="138.5" width="1.2" height="2.5" fill="#b0aea8"/>
<rect x="827.9" y="138.5" width="1.2" height="2.5" fill="#b0aea8"/>
<rect x="837.0" y="138.5" width="1.2" height="2.5" fill="#b0aea8"/>
<rect x="846.1" y="138.5" width="1.2" height="2.5" fill="#b0aea8"/>
<rect x="855.2" y="138" width="1.2" height="4" fill="#b8b6b0"/>
<rect x="864.3" y="138.5" width="1.2" height="2.5" fill="#b0aea8"/>
<rect x="873.3" y="138.5" width="1.2" height="2.5" fill="#b0aea8"/>
<rect x="882.4" y="138.5" width="1.2" height="2.5" fill="#b0aea8"/>
<rect x="891.5" y="138.5" width="1.2" height="2.5" fill="#b0aea8"/>
<rect x="900.7" y="132" width="1" height="1.3" fill="#b8b6b0"/><rect x="900.7" y="150.3" width="1" height="1.5" fill="#b8b6b0"/>
<rect x="909.6" y="138.5" width="1.2" height="2.5" fill="#b0aea8"/>
<rect x="918.7" y="138.5" width="1.2" height="2.5" fill="#b0aea8"/>
<rect x="927.8" y="138.5" width="1.2" height="2.5" fill="#b0aea8"/>
<rect x="936.9" y="138.5" width="1.2" height="2.5" fill="#b0aea8"/>
<rect x="945.9" y="138" width="1.2" height="4" fill="#b8b6b0"/>
<rect x="955.0" y="138.5" width="1.2" height="2.5" fill="#b0aea8"/>
<rect x="964.1" y="138.5" width="1.2" height="2.5" fill="#b0aea8"/>
<rect x="973.2" y="138.5" width="1.2" height="2.5" fill="#b0aea8"/>
<rect x="982.3" y="138.5" width="1.2" height="2.5" fill="#b0aea8"/>
<rect x="991.4" y="132" width="1" height="1.3" fill="#b8b6b0"/><rect x="991.4" y="150.3" width="1" height="1.5" fill="#b8b6b0"/>
<rect x="1000.4" y="138.5" width="1.2" height="2.5" fill="#b0aea8"/>
<rect x="1009.5" y="138.5" width="1.2" height="2.5" fill="#b0aea8"/>
<rect x="1018.6" y="138.5" width="1.2" height="2.5" fill="#b0aea8"/>
<rect x="1027.6" y="138.5" width="1.2" height="2.5" fill="#b0aea8"/>
<rect x="1036.7" y="138" width="1.2" height="4" fill="#b8b6b0"/>
<rect x="1045.8" y="138.5" width="1.2" height="2.5" fill="#b0aea8"/>
<rect x="1054.9" y="138.5" width="1.2" height="2.5" fill="#b0aea8"/>
<rect x="1063.9" y="138.5" width="1.2" height="2.5" fill="#b0aea8"/>
<rect x="1073.0" y="138.5" width="1.2" height="2.5" fill="#b0aea8"/>
<rect x="1082.2" y="132" width="1" height="1.3" fill="#b8b6b0"/><rect x="1082.2" y="150.3" width="1" height="1.5" fill="#b8b6b0"/>
<rect x="1091.2" y="138.5" width="1.2" height="2.5" fill="#b0aea8"/>
<rect x="1100.3" y="138.5" width="1.2" height="2.5" fill="#b0aea8"/>
<rect x="1109.3" y="138.5" width="1.2" height="2.5" fill="#b0aea8"/>
<rect x="1118.4" y="138.5" width="1.2" height="2.5" fill="#b0aea8"/>
<rect x="1127.5" y="138" width="1.2" height="4" fill="#b8b6b0"/>
<rect x="1136.6" y="138.5" width="1.2" height="2.5" fill="#b0aea8"/>
<rect x="1145.6" y="138.5" width="1.2" height="2.5" fill="#b0aea8"/>
<rect x="1154.7" y="138.5" width="1.2" height="2.5" fill="#b0aea8"/>
<rect x="1163.8" y="138.5" width="1.2" height="2.5" fill="#b0aea8"/>
<rect x="1173.0" y="132" width="1" height="1.3" fill="#b8b6b0"/><rect x="1173.0" y="150.3" width="1" height="1.5" fill="#b8b6b0"/>
<rect x="1181.9" y="138.5" width="1.2" height="2.5" fill="#b0aea8"/>
<rect x="1191.0" y="138.5" width="1.2" height="2.5" fill="#b0aea8"/>
<rect x="1200.1" y="138.5" width="1.2" height="2.5" fill="#b0aea8"/>
<rect x="1209.2" y="138.5" width="1.2" height="2.5" fill="#b0aea8"/>
<rect x="1218.3" y="138" width="1.2" height="4" fill="#b8b6b0"/>
<rect x="1227.3" y="138.5" width="1.2" height="2.5" fill="#b0aea8"/>
<rect x="1236.4" y="138.5" width="1.2" height="2.5" fill="#b0aea8"/>
<rect x="1245.5" y="138.5" width="1.2" height="2.5" fill="#b0aea8"/>
<rect x="1254.6" y="138.5" width="1.2" height="2.5" fill="#b0aea8"/>
<rect x="1263.7" y="132" width="1" height="1.3" fill="#b8b6b0"/><rect x="1263.7" y="150.3" width="1" height="1.5" fill="#b8b6b0"/>
<rect x="1272.7" y="138.5" width="1.2" height="2.5" fill="#b0aea8"/>
<rect x="1281.8" y="138.5" width="1.2" height="2.5" fill="#b0aea8"/>
<rect x="1290.9" y="138.5" width="1.2" height="2.5" fill="#b0aea8"/>
<rect x="1299.9" y="138.5" width="1.2" height="2.5" fill="#b0aea8"/>
<rect x="1309.0" y="138" width="1.2" height="4" fill="#b8b6b0"/>
<rect x="1318.1" y="138.5" width="1.2" height="2.5" fill="#b0aea8"/>
<rect x="1327.2" y="138.5" width="1.2" height="2.5" fill="#b0aea8"/>
<rect x="1336.3" y="138.5" width="1.2" height="2.5" fill="#b0aea8"/>
<rect x="1345.3" y="138.5" width="1.2" height="2.5" fill="#b0aea8"/>
<rect x="1354.5" y="132" width="1" height="1.3" fill="#b8b6b0"/><rect x="1354.5" y="150.3" width="1" height="1.5" fill="#b8b6b0"/>
<rect x="1363.5" y="138.5" width="1.2" height="2.5" fill="#b0aea8"/>
<rect x="1372.6" y="138.5" width="1.2" height="2.5" fill="#b0aea8"/>
<rect x="1381.6" y="138.5" width="1.2" height="2.5" fill="#b0aea8"/>
<rect x="1390.7" y="138.5" width="1.2" height="2.5" fill="#b0aea8"/>
<rect x="1399.8" y="138" width="1.2" height="4" fill="#b8b6b0"/>
<rect x="1408.9" y="138.5" width="1.2" height="2.5" fill="#b0aea8"/>
<rect x="1417.9" y="138.5" width="1.2" height="2.5" fill="#b0aea8"/>
<rect x="1427.0" y="138.5" width="1.2" height="2.5" fill="#b0aea8"/>
<rect x="1436.1" y="138.5" width="1.2" height="2.5" fill="#b0aea8"/>
<rect x="1445.3" y="132" width="1" height="1.3" fill="#b8b6b0"/><rect x="1445.3" y="150.3" width="1" height="1.5" fill="#b8b6b0"/>
<rect x="1454.3" y="138.5" width="1.2" height="2.5" fill="#b0aea8"/>
<rect x="1463.3" y="138.5" width="1.2" height="2.5" fill="#b0aea8"/>
<rect x="1472.4" y="138.5" width="1.2" height="2.5" fill="#b0aea8"/>
<rect x="1481.5" y="138.5" width="1.2" height="2.5" fill="#b0aea8"/>
<rect x="1490.6" y="138" width="1.2" height="4" fill="#b8b6b0"/>
<rect x="1499.6" y="138.5" width="1.2" height="2.5" fill="#b0aea8"/>
<rect x="1508.7" y="138.5" width="1.2" height="2.5" fill="#b0aea8"/>
<rect x="1517.8" y="138.5" width="1.2" height="2.5" fill="#b0aea8"/>
<rect x="1526.9" y="138.5" width="1.2" height="2.5" fill="#b0aea8"/>
<rect x="1536.0" y="132" width="1" height="1.3" fill="#b8b6b0"/><rect x="1536.0" y="150.3" width="1" height="1.5" fill="#b8b6b0"/>
<rect x="1545.0" y="138.5" width="1.2" height="2.5" fill="#b0aea8"/>
<rect x="1554.1" y="138.5" width="1.2" height="2.5" fill="#b0aea8"/>
<rect x="1563.2" y="138.5" width="1.2" height="2.5" fill="#b0aea8"/>
<rect x="1572.3" y="138.5" width="1.2" height="2.5" fill="#b0aea8"/>
<rect x="1581.3" y="138" width="1.2" height="4" fill="#b8b6b0"/>
<rect x="1590.4" y="138.5" width="1.2" height="2.5" fill="#b0aea8"/>
<rect x="1599.5" y="138.5" width="1.2" height="2.5" fill="#b0aea8"/>
<rect x="1608.6" y="138.5" width="1.2" height="2.5" fill="#b0aea8"/>
<rect x="1617.6" y="138.5" width="1.2" height="2.5" fill="#b0aea8"/>
<rect x="1626.8" y="132" width="1" height="1.3" fill="#b8b6b0"/><rect x="1626.8" y="150.3" width="1" height="1.5" fill="#b8b6b0"/>
<rect x="1635.8" y="138.5" width="1.2" height="2.5" fill="#b0aea8"/>
<rect x="1644.9" y="138.5" width="1.2" height="2.5" fill="#b0aea8"/>
<rect x="1654.0" y="138.5" width="1.2" height="2.5" fill="#b0aea8"/>
<rect x="1663.0" y="138.5" width="1.2" height="2.5" fill="#b0aea8"/>
<rect x="1672.1" y="138" width="1.2" height="4" fill="#b8b6b0"/>
<rect x="1681.2" y="138.5" width="1.2" height="2.5" fill="#b0aea8"/>
<rect x="1690.3" y="138.5" width="1.2" height="2.5" fill="#b0aea8"/>
<rect x="1699.3" y="138.5" width="1.2" height="2.5" fill="#b0aea8"/>
<rect x="1708.4" y="138.5" width="1.2" height="2.5" fill="#b0aea8"/>
<rect x="1717.6" y="132" width="1" height="1.3" fill="#b8b6b0"/><rect x="1717.6" y="150.3" width="1" height="1.5" fill="#b8b6b0"/>
<rect x="1726.6" y="138.5" width="1.2" height="2.5" fill="#b0aea8"/>
<rect x="1735.6" y="138.5" width="1.2" height="2.5" fill="#b0aea8"/>
<rect x="1744.7" y="138.5" width="1.2" height="2.5" fill="#b0aea8"/>
<rect x="1753.8" y="138.5" width="1.2" height="2.5" fill="#b0aea8"/>
<rect x="1762.9" y="138" width="1.2" height="4" fill="#b8b6b0"/>
<rect x="1772.0" y="138.5" width="1.2" height="2.5" fill="#b0aea8"/>
<rect x="1781.0" y="138.5" width="1.2" height="2.5" fill="#b0aea8"/>
<rect x="1790.1" y="138.5" width="1.2" height="2.5" fill="#b0aea8"/>
<rect x="1799.2" y="138.5" width="1.2" height="2.5" fill="#b0aea8"/>
<rect x="1808.4" y="132" width="1" height="1.3" fill="#b8b6b0"/><rect x="1808.4" y="150.3" width="1" height="1.5" fill="#b8b6b0"/>
<rect x="1817.3" y="138.5" width="1.2" height="2.5" fill="#b0aea8"/>
<rect x="1826.4" y="138.5" width="1.2" height="2.5" fill="#b0aea8"/>
<rect x="1835.5" y="138.5" width="1.2" height="2.5" fill="#b0aea8"/>
<text x="174.2" y="146.2" font-family="Liberation Sans" font-size="16" fill="#959289" text-anchor="middle">3</text>
<text x="265.0" y="146.2" font-family="Liberation Sans" font-size="16" fill="#959289" text-anchor="middle">4</text>
<text x="355.7" y="146.2" font-family="Liberation Sans" font-size="16" fill="#959289" text-anchor="middle">5</text>
<text x="446.5" y="146.2" font-family="Liberation Sans" font-size="16" fill="#959289" text-anchor="middle">6</text>
<text x="537.3" y="146.2" font-family="Liberation Sans" font-size="16" fill="#959289" text-anchor="middle">7</text>
<text x="628.0" y="146.2" font-family="Liberation Sans" font-size="16" fill="#959289" text-anchor="middle">8</text>
<text x="718.8" y="146.2" font-family="Liberation Sans" font-size="16" fill="#959289" text-anchor="middle">9</text>
<text x="809.6" y="146.2" font-family="Liberation Sans" font-size="16" fill="#959289" text-anchor="middle">10</text>
<text x="900.4" y="146.2" font-family="Liberation Sans" font-size="16" fill="#959289" text-anchor="middle">11</text>
<text x="991.1" y="146.2" font-family="Liberation Sans" font-size="16" fill="#959289" text-anchor="middle">12</text>
<text x="1081.9" y="146.2" font-family="Liberation Sans" font-size="16" fill="#959289" text-anchor="middle">13</text>
<text x="1172.7" y="146.2" font-family="Liberation Sans" font-size="16" fill="#959289" text-anchor="middle">14</text>
<text x="1263.4" y="146.2" font-family="Liberation Sans" font-size="16" fill="#959289" text-anchor="middle">15</text>
<text x="1354.2" y="146.2" font-family="Liberation Sans" font-size="16" fill="#959289" text-anchor="middle">16</text>
<text x="1445.0" y="146.2" font-family="Liberation Sans" font-size="16" fill="#959289" text-anchor="middle">17</text>
<text x="1535.8" y="146.2" font-family="Liberation Sans" font-size="16" fill="#959289" text-anchor="middle">18</text>
<text x="1626.5" y="146.2" font-family="Liberation Sans" font-size="16" fill="#959289" text-anchor="middle">19</text>
<text x="1717.3" y="146.2" font-family="Liberation Sans" font-size="16" fill="#959289" text-anchor="middle">20</text>
<text x="1808.1" y="146.2" font-family="Liberation Sans" font-size="16" fill="#959289" text-anchor="middle">21</text>
<path d="M1620.5 151 V147 L1627.5 142.5 L1634.5 147 V151" fill="none" stroke="#a8a6a0" stroke-width="1"/>
</svg>
<svg class="a" style="left:72px;top:157px" width="20" height="963" viewBox="72 157 20 963">
<rect x="79" y="164.0" width="2.5" height="1.2" fill="#b0aea8"/>
<rect x="79" y="173.1" width="2.5" height="1.2" fill="#b0aea8"/>
<rect x="79" y="182.2" width="2.5" height="1.2" fill="#b0aea8"/>
<rect x="79" y="191.2" width="2.5" height="1.2" fill="#b0aea8"/>
<rect x="78.5" y="200.3" width="4" height="1.2" fill="#b8b6b0"/>
<rect x="79" y="209.4" width="2.5" height="1.2" fill="#b0aea8"/>
<rect x="79" y="218.5" width="2.5" height="1.2" fill="#b0aea8"/>
<rect x="79" y="227.5" width="2.5" height="1.2" fill="#b0aea8"/>
<rect x="79" y="236.6" width="2.5" height="1.2" fill="#b0aea8"/>
<rect x="72.3" y="245.8" width="1.3" height="1" fill="#b8b6b0"/><rect x="90.3" y="245.8" width="1.5" height="1" fill="#b8b6b0"/>
<rect x="79" y="254.8" width="2.5" height="1.2" fill="#b0aea8"/>
<rect x="79" y="263.9" width="2.5" height="1.2" fill="#b0aea8"/>
<rect x="79" y="272.9" width="2.5" height="1.2" fill="#b0aea8"/>
<rect x="79" y="282.0" width="2.5" height="1.2" fill="#b0aea8"/>
<rect x="78.5" y="291.1" width="4" height="1.2" fill="#b8b6b0"/>
<rect x="79" y="300.2" width="2.5" height="1.2" fill="#b0aea8"/>
<rect x="79" y="309.2" width="2.5" height="1.2" fill="#b0aea8"/>
<rect x="79" y="318.3" width="2.5" height="1.2" fill="#b0aea8"/>
<rect x="79" y="327.4" width="2.5" height="1.2" fill="#b0aea8"/>
<rect x="72.3" y="336.6" width="1.3" height="1" fill="#b8b6b0"/><rect x="90.3" y="336.6" width="1.5" height="1" fill="#b8b6b0"/>
<rect x="79" y="345.5" width="2.5" height="1.2" fill="#b0aea8"/>
<rect x="79" y="354.6" width="2.5" height="1.2" fill="#b0aea8"/>
<rect x="79" y="363.7" width="2.5" height="1.2" fill="#b0aea8"/>
<rect x="79" y="372.8" width="2.5" height="1.2" fill="#b0aea8"/>
<rect x="78.5" y="381.9" width="4" height="1.2" fill="#b8b6b0"/>
<rect x="79" y="390.9" width="2.5" height="1.2" fill="#b0aea8"/>
<rect x="79" y="400.0" width="2.5" height="1.2" fill="#b0aea8"/>
<rect x="79" y="409.1" width="2.5" height="1.2" fill="#b0aea8"/>
<rect x="79" y="418.2" width="2.5" height="1.2" fill="#b0aea8"/>
<rect x="72.3" y="427.3" width="1.3" height="1" fill="#b8b6b0"/><rect x="90.3" y="427.3" width="1.5" height="1" fill="#b8b6b0"/>
<rect x="79" y="436.3" width="2.5" height="1.2" fill="#b0aea8"/>
<rect x="79" y="445.4" width="2.5" height="1.2" fill="#b0aea8"/>
<rect x="79" y="454.5" width="2.5" height="1.2" fill="#b0aea8"/>
<rect x="79" y="463.5" width="2.5" height="1.2" fill="#b0aea8"/>
<rect x="78.5" y="472.6" width="4" height="1.2" fill="#b8b6b0"/>
<rect x="79" y="481.7" width="2.5" height="1.2" fill="#b0aea8"/>
<rect x="79" y="490.8" width="2.5" height="1.2" fill="#b0aea8"/>
<rect x="79" y="499.9" width="2.5" height="1.2" fill="#b0aea8"/>
<rect x="79" y="508.9" width="2.5" height="1.2" fill="#b0aea8"/>
<rect x="72.3" y="518.1" width="1.3" height="1" fill="#b8b6b0"/><rect x="90.3" y="518.1" width="1.5" height="1" fill="#b8b6b0"/>
<rect x="79" y="527.1" width="2.5" height="1.2" fill="#b0aea8"/>
<rect x="79" y="536.2" width="2.5" height="1.2" fill="#b0aea8"/>
<rect x="79" y="545.2" width="2.5" height="1.2" fill="#b0aea8"/>
<rect x="79" y="554.3" width="2.5" height="1.2" fill="#b0aea8"/>
<rect x="78.5" y="563.4" width="4" height="1.2" fill="#b8b6b0"/>
<rect x="79" y="572.5" width="2.5" height="1.2" fill="#b0aea8"/>
<rect x="79" y="581.5" width="2.5" height="1.2" fill="#b0aea8"/>
<rect x="79" y="590.6" width="2.5" height="1.2" fill="#b0aea8"/>
<rect x="79" y="599.7" width="2.5" height="1.2" fill="#b0aea8"/>
<rect x="72.3" y="608.9" width="1.3" height="1" fill="#b8b6b0"/><rect x="90.3" y="608.9" width="1.5" height="1" fill="#b8b6b0"/>
<rect x="79" y="617.9" width="2.5" height="1.2" fill="#b0aea8"/>
<rect x="79" y="626.9" width="2.5" height="1.2" fill="#b0aea8"/>
<rect x="79" y="636.0" width="2.5" height="1.2" fill="#b0aea8"/>
<rect x="79" y="645.1" width="2.5" height="1.2" fill="#b0aea8"/>
<rect x="78.5" y="654.2" width="4" height="1.2" fill="#b8b6b0"/>
<rect x="79" y="663.2" width="2.5" height="1.2" fill="#b0aea8"/>
<rect x="79" y="672.3" width="2.5" height="1.2" fill="#b0aea8"/>
<rect x="79" y="681.4" width="2.5" height="1.2" fill="#b0aea8"/>
<rect x="79" y="690.5" width="2.5" height="1.2" fill="#b0aea8"/>
<rect x="72.3" y="699.6" width="1.3" height="1" fill="#b8b6b0"/><rect x="90.3" y="699.6" width="1.5" height="1" fill="#b8b6b0"/>
<rect x="79" y="708.6" width="2.5" height="1.2" fill="#b0aea8"/>
<rect x="79" y="717.7" width="2.5" height="1.2" fill="#b0aea8"/>
<rect x="79" y="726.8" width="2.5" height="1.2" fill="#b0aea8"/>
<rect x="79" y="735.9" width="2.5" height="1.2" fill="#b0aea8"/>
<rect x="78.5" y="744.9" width="4" height="1.2" fill="#b8b6b0"/>
<rect x="79" y="754.0" width="2.5" height="1.2" fill="#b0aea8"/>
<rect x="79" y="763.1" width="2.5" height="1.2" fill="#b0aea8"/>
<rect x="79" y="772.2" width="2.5" height="1.2" fill="#b0aea8"/>
<rect x="79" y="781.2" width="2.5" height="1.2" fill="#b0aea8"/>
<rect x="72.3" y="790.4" width="1.3" height="1" fill="#b8b6b0"/><rect x="90.3" y="790.4" width="1.5" height="1" fill="#b8b6b0"/>
<rect x="79" y="799.4" width="2.5" height="1.2" fill="#b0aea8"/>
<rect x="79" y="808.5" width="2.5" height="1.2" fill="#b0aea8"/>
<rect x="79" y="817.6" width="2.5" height="1.2" fill="#b0aea8"/>
<rect x="79" y="826.6" width="2.5" height="1.2" fill="#b0aea8"/>
<rect x="78.5" y="835.7" width="4" height="1.2" fill="#b8b6b0"/>
<rect x="79" y="844.8" width="2.5" height="1.2" fill="#b0aea8"/>
<rect x="79" y="853.9" width="2.5" height="1.2" fill="#b0aea8"/>
<rect x="79" y="862.9" width="2.5" height="1.2" fill="#b0aea8"/>
<rect x="79" y="872.0" width="2.5" height="1.2" fill="#b0aea8"/>
<rect x="72.3" y="881.2" width="1.3" height="1" fill="#b8b6b0"/><rect x="90.3" y="881.2" width="1.5" height="1" fill="#b8b6b0"/>
<rect x="79" y="890.2" width="2.5" height="1.2" fill="#b0aea8"/>
<rect x="79" y="899.2" width="2.5" height="1.2" fill="#b0aea8"/>
<rect x="79" y="908.3" width="2.5" height="1.2" fill="#b0aea8"/>
<rect x="79" y="917.4" width="2.5" height="1.2" fill="#b0aea8"/>
<rect x="78.5" y="926.5" width="4" height="1.2" fill="#b8b6b0"/>
<rect x="79" y="935.6" width="2.5" height="1.2" fill="#b0aea8"/>
<rect x="79" y="944.6" width="2.5" height="1.2" fill="#b0aea8"/>
<rect x="79" y="953.7" width="2.5" height="1.2" fill="#b0aea8"/>
<rect x="79" y="962.8" width="2.5" height="1.2" fill="#b0aea8"/>
<rect x="72.3" y="972.0" width="1.3" height="1" fill="#b8b6b0"/><rect x="90.3" y="972.0" width="1.5" height="1" fill="#b8b6b0"/>
<rect x="79" y="980.9" width="2.5" height="1.2" fill="#b0aea8"/>
<rect x="79" y="990.0" width="2.5" height="1.2" fill="#b0aea8"/>
<rect x="79" y="999.1" width="2.5" height="1.2" fill="#b0aea8"/>
<rect x="79" y="1008.2" width="2.5" height="1.2" fill="#b0aea8"/>
<rect x="78.5" y="1017.2" width="4" height="1.2" fill="#b8b6b0"/>
<rect x="79" y="1026.3" width="2.5" height="1.2" fill="#b0aea8"/>
<rect x="79" y="1035.4" width="2.5" height="1.2" fill="#b0aea8"/>
<rect x="79" y="1044.5" width="2.5" height="1.2" fill="#b0aea8"/>
<rect x="79" y="1053.6" width="2.5" height="1.2" fill="#b0aea8"/>
<rect x="72.3" y="1062.7" width="1.3" height="1" fill="#b8b6b0"/><rect x="90.3" y="1062.7" width="1.5" height="1" fill="#b8b6b0"/>
<rect x="79" y="1071.7" width="2.5" height="1.2" fill="#b0aea8"/>
<rect x="79" y="1080.8" width="2.5" height="1.2" fill="#b0aea8"/>
<rect x="79" y="1089.9" width="2.5" height="1.2" fill="#b0aea8"/>
<rect x="79" y="1098.9" width="2.5" height="1.2" fill="#b0aea8"/>
<rect x="78.5" y="1108.0" width="4" height="1.2" fill="#b8b6b0"/>
<rect x="79" y="1117.1" width="2.5" height="1.2" fill="#b0aea8"/>
<text x="0" y="0" transform="translate(86.3,244.8) rotate(-90)" font-family="Liberation Sans" font-size="16" fill="#959289" text-anchor="middle">10</text>
<text x="0" y="0" transform="translate(86.3,335.6) rotate(-90)" font-family="Liberation Sans" font-size="16" fill="#959289" text-anchor="middle">11</text>
<text x="0" y="0" transform="translate(86.3,426.3) rotate(-90)" font-family="Liberation Sans" font-size="16" fill="#959289" text-anchor="middle">12</text>
<text x="0" y="0" transform="translate(86.3,517.1) rotate(-90)" font-family="Liberation Sans" font-size="16" fill="#959289" text-anchor="middle">13</text>
<text x="0" y="0" transform="translate(86.3,607.9) rotate(-90)" font-family="Liberation Sans" font-size="16" fill="#959289" text-anchor="middle">14</text>
<text x="0" y="0" transform="translate(86.3,698.6) rotate(-90)" font-family="Liberation Sans" font-size="16" fill="#959289" text-anchor="middle">15</text>
<text x="0" y="0" transform="translate(86.3,789.4) rotate(-90)" font-family="Liberation Sans" font-size="16" fill="#959289" text-anchor="middle">16</text>
<text x="0" y="0" transform="translate(86.3,880.2) rotate(-90)" font-family="Liberation Sans" font-size="16" fill="#959289" text-anchor="middle">17</text>
<text x="0" y="0" transform="translate(86.3,971.0) rotate(-90)" font-family="Liberation Sans" font-size="16" fill="#959289" text-anchor="middle">18</text>
<text x="0" y="0" transform="translate(86.3,1061.7) rotate(-90)" font-family="Liberation Sans" font-size="16" fill="#959289" text-anchor="middle">19</text>
<text x="0" y="0" transform="translate(86.3,1152.5) rotate(-90)" font-family="Liberation Sans" font-size="16" fill="#959289" text-anchor="middle">20</text>
</svg>
<div id="page" class="a"></div>
<div id="img" class="a" style="left:97px;top:157px;width:1553px;height:963px;background:#c9c9c9;overflow:hidden">
 <!-- tab strip -->
 <div class="a" style="left:0;top:0;width:1553px;height:18px;background:linear-gradient(180deg,#fbfbfb,#ededed 40%,#dedede)"></div>
 <div class="a" style="left:64px;top:17px;width:1489px;height:1px;background:#9c9c9c"></div>
 <div class="a" style="left:0;top:0;width:64px;height:18px;background:linear-gradient(180deg,#f8f8f8,#ececec)"></div>
 <div class="a" style="left:63px;top:0;width:1px;height:18px;background:#a8a8a8"></div><div class="a" style="left:0;top:17px;width:64px;height:1px;background:#cfcfcf"></div>
 <div class="a" style="left:0;top:0;width:5px;height:1.5px;background:#1a1a1a"></div><div class="a" style="left:14px;top:0;width:2px;height:8px;background:#3a3a3a"></div><div class="a" style="left:25px;top:0;width:2px;height:8px;background:#7a7a7a"></div><div class="a" style="left:34px;top:-4px;width:9px;height:12px;border:2px solid #a0a0a0;border-radius:50%;border-top-color:transparent"></div><div class="a" style="left:47px;top:0;width:2px;height:8px;background:#c8c8c8"></div>
 <!-- toolbar -->
 <div class="a" style="left:0;top:18px;width:1553px;height:70px;background:
   repeating-linear-gradient(179.4deg,rgba(255,255,255,0) 0px,rgba(255,255,255,0.10) 2px,rgba(255,255,255,0) 5px),repeating-linear-gradient(179.7deg,rgba(0,0,0,0) 0px,rgba(0,0,0,0.018) 3px,rgba(0,0,0,0) 11px),
   linear-gradient(180deg,#e6e6e6 0%,#e2e2e2 30%,#d9d9d9 55%,#e0e0e0 80%,#e8e8e8 100%)"></div>
 <!-- header row -->
 <div class="a" style="left:193px;top:88px;width:1360px;height:35px;background:#4d4b46"></div>
 <div class="a" style="left:490px;top:88px;width:1032px;height:35px;background:#4f4c46"></div>
 <div class="a" style="left:490px;top:88px;width:1px;height:35px;background:#45433e"></div>
 <div class="a" style="left:1253px;top:88px;width:1px;height:35px;background:#45433e"></div>
 <div class="a" style="left:1522px;top:88px;width:1px;height:35px;background:#45433e"></div>
 <div class="a" style="left:193px;top:122px;width:1360px;height:1px;background:#3e3c38"></div>
 <div class="t" style="left:203px;top:97px;font-size:22px;color:#4a4843">Von</div>
 <div class="t" style="left:513px;top:97px;font-size:22px;color:#4b4842">Betreff</div>
 <div class="t" style="left:1265px;top:97px;font-size:22px;color:#4b4842">Datum</div>
 <!-- folder pane -->
 <div class="a" style="left:0;top:88px;width:193px;height:868px;background:#c8c8c8"></div>
 <div class="a" style="left:192px;top:123px;width:1px;height:833px;background:#cecdca"></div>
 <div class="a" style="left:-2px;top:120px;width:194px;height:31px;border:1px dotted #e0c478"></div>
 <div class="t" style="left:-1px;top:124px;font-size:24px;letter-spacing:0.5px;color:#ffffff">ng</div>
 <!-- bottom -->
 <div class="a" style="left:0;top:956px;width:1553px;height:1px;background:#8c8c8c"></div>
 <div class="a" style="left:0;top:957px;width:1553px;height:6px;background:linear-gradient(180deg,#cccccc,#cfcfcf)"></div>
</div>
<div class="a" style="left:1650px;top:157px;width:68px;height:963px;background:#dcdcdc"></div>
<div class="a" style="left:1718px;top:157px;width:16px;height:963px;background:linear-gradient(90deg,#838383 0px,#838383 3px,#626262 3px,#606060 7px,#777777 8px,#808080 15px)"></div>
<div class="a" style="left:1728px;top:157px;width:113px;height:963px;background:#808080"></div>
<!-- TB -->
<svg class="a" style="left:97px;top:157px" width="1553" height="123" viewBox="97 157 1553 123">
<defs>
 <linearGradient id="gEnv" x1="0" y1="0" x2="0" y2="1"><stop offset="0" stop-color="#e4eefa"/><stop offset="1" stop-color="#b0cdf0"/></linearGradient>
 <linearGradient id="gCmp" x1="0" y1="0" x2="1" y2="1"><stop offset="0" stop-color="#f4f8ff"/><stop offset="1" stop-color="#8ab8f0"/></linearGradient>
 <linearGradient id="gPrt" x1="0" y1="0" x2="0" y2="1"><stop offset="0" stop-color="#dce6f4"/><stop offset="1" stop-color="#8aa4d4"/></linearGradient>
</defs>
<!-- tabstrip icons -->
<rect x="1583" y="155" width="17" height="7" fill="#4a8ef0" stroke="#2a6ad0" stroke-width="1"/>
<g fill="#d0e4ff"><rect x="1585" y="158" width="2" height="2"/><rect x="1589" y="158" width="2" height="2"/><rect x="1593" y="158" width="2" height="2"/></g>
<rect x="1623.5" y="153" width="15" height="10.5" rx="2" fill="#f0e0b0" stroke="#d8b050" stroke-width="1.2"/>
<g fill="#fff"><rect x="1627" y="158" width="3" height="2.5"/><rect x="1632" y="158" width="3" height="2.5"/></g>
<!-- separators -->
<g fill="#bdbdbd"><rect x="176" y="181" width="1" height="56"/><rect x="667" y="181" width="1" height="56"/><rect x="945" y="181" width="1" height="56"/><rect x="639" y="200" width="1" height="20"/></g>
<path d="M646 207 L650.5 211.5 L655 207" stroke="#8a8a8a" stroke-width="1.6" fill="none"/>
<!-- compose -->
<rect x="98" y="183" width="23.5" height="25.5" rx="5" fill="url(#gCmp)" stroke="#3a88f0" stroke-width="2"/>
<g stroke="#5a8ad8" stroke-width="1.2"><path d="M104 189.5 H113"/><path d="M104 195 H112"/><path d="M104 200.5 H113"/></g>
<path d="M108 200 L122.5 186.5" stroke="#8a6a10" stroke-width="5" stroke-linecap="round"/>
<path d="M108.5 199.5 L122 187" stroke="#f8d030" stroke-width="3"/>
<circle cx="123" cy="185.5" r="2.5" fill="#f04030"/>
<!-- reply (faded) -->
<g opacity="0.62">
<rect x="230.5" y="182.5" width="27" height="19.5" rx="2.5" fill="url(#gEnv)" stroke="#3a84f0" stroke-width="1.3"/>
<path d="M231 183.5 L244 194 L257 183.5" stroke="#3a84f0" stroke-width="1.1" fill="none"/>
<path d="M231 202 L236 193.5 L239.5 197 L246 191 L249 194 L243.5 199.5 L246.5 203 L236 209.5 Z" fill="#b8d0f0" stroke="#3a84f0" stroke-width="1.2" stroke-linejoin="round"/>
</g>
<!-- reply all -->
<g opacity="0.62">
<rect x="388.5" y="182.5" width="21" height="15" rx="2.5" fill="url(#gEnv)" stroke="#3a84f0" stroke-width="1.2"/>
<rect x="393.5" y="187" width="22.5" height="17" rx="2.5" fill="url(#gEnv)" stroke="#3a84f0" stroke-width="1.3"/>
<path d="M394 188 L405 196 L416 188" stroke="#3a84f0" stroke-width="1.1" fill="none"/>
<path d="M389 202 L394 194 L397 197 L403 191.5 L406 194.5 L400.5 199.5 L403.5 203 L393 209.5 Z" fill="#b8d0f0" stroke="#3a84f0" stroke-width="1.2" stroke-linejoin="round"/>
</g>
<!-- forward -->
<g opacity="0.62">
<rect x="554.5" y="182.5" width="27" height="19.5" rx="2.5" fill="url(#gEnv)" stroke="#3a84f0" stroke-width="1.3"/>
<path d="M555 183.5 L568 194 L581 183.5" stroke="#3a84f0" stroke-width="1.1" fill="none"/>
<path d="M580 208.5 L576.5 199 L573.5 202 L566 195 L563 198 L569.5 204.5 L567 207.5 Z" fill="#c0b8e8" stroke="#7a70d0" stroke-width="1.2" stroke-linejoin="round"/>
</g>
<!-- delete -->
<g opacity="0.62">
<rect x="708.5" y="182.5" width="27" height="19.5" rx="2.5" fill="url(#gEnv)" stroke="#3a84f0" stroke-width="1.3"/>
<path d="M709 183.5 L722 194 L735 183.5" stroke="#3a84f0" stroke-width="1.1" fill="none"/>
<path d="M720 194 L733 207 M733 194 L720 207" stroke="#f04020" stroke-width="4" stroke-linecap="round"/>
<path d="M720 194 L733 207 M733 194 L720 207" stroke="#ffb0a0" stroke-width="1.5" stroke-linecap="round"/>
</g>
<!-- junk -->
<g opacity="0.62">
<path d="M792.5 186 Q 792.5 182 805 182 Q 817.5 182 817.5 186 L 815 207 Q 805 210 795 207 Z" fill="#e8ecf0" stroke="#8a9aaa" stroke-width="1.2"/>
<circle cx="809.5" cy="198.5" r="9" fill="#f87050" stroke="#e04828" stroke-width="1"/>
<circle cx="809.5" cy="198.5" r="6" fill="none" stroke="#ffd0c0" stroke-width="1.5"/>
<path d="M805.5 194.5 L813.5 202.5" stroke="#ffd0c0" stroke-width="1.8"/>
</g>
<!-- print -->
<g opacity="0.62">
<rect x="882.5" y="182.5" width="15" height="11" rx="1.5" fill="#e0ecfa" stroke="#3a84f0" stroke-width="1.3"/>
<path d="M876.5 196 Q 876.5 192.5 880 192.5 H899.5 Q 903 192.5 903 196 V208.5 H876.5 Z" fill="url(#gPrt)" stroke="#3a6ad8" stroke-width="1.4"/>
<path d="M878 203.5 H901.5" stroke="#f4f8ff" stroke-width="1.2"/>
</g>
</svg>
<div class="a" style="left:97px;top:157px;width:100px;height:123px;overflow:hidden">
 <div class="t" style="left:-4px;top:57px;font-size:24px;letter-spacing:0.3px;color:#2a2a2a">fassen</div>
</div>
<div class="t tbt" style="left:187px;letter-spacing:0.8px">Antworten</div>
<div class="t tbt" style="left:317px;letter-spacing:0.4px">Allen antworten</div>
<div class="t tbt" style="left:503px;letter-spacing:0.55px">Weiterleiten</div>
<div class="t tbt" style="left:680px;letter-spacing:-0.4px">Löschen</div>
<div class="t tbt" style="left:781px;letter-spacing:0px">Junk</div>
<div class="t tbt" style="left:847px;letter-spacing:0.1px">Drucken</div>


<div id="vscroll" class="a"></div>
<div id="hscroll" class="a"></div>



<!-- DRAWING -->
<div class="a" style="left:479px;top:293px;width:215px;height:40px;background:#1e1e1e;border:1px solid #3c3830;border-radius:2px"></div>
<div class="t" style="left:486px;top:302px;font-size:24px;letter-spacing:-0.1px;color:#f0f0f0">Nach Von sortieren</div>
<svg class="a" style="left:870px;top:300px" width="60" height="270" viewBox="870 300 60 270">
<path d="M900.5 314 L914.2 354.8 H886.8 Z" fill="#3465a8"/>
<rect x="900.4" y="354" width="1.4" height="184" fill="#3465a8"/>
<circle cx="900.6" cy="550" r="13.5" fill="#3465a8"/>
</svg>
<div class="t" style="left:416px;top:582px;font-size:57.5px;color:#000">Schrift- und Hintergrundfarbe</div>

<!-- TABS -->
<div id="tabbar" class="a"></div>
<div id="sep" class="a"></div>
<div id="statusline" class="a"></div>
<div id="status" class="a"></div>
<div class="t st" style="left:12px;letter-spacing:-0.36px">Folie 1 von 1</div>
<div class="t st" style="left:645px;letter-spacing:0.27px">Standard</div>
<div class="t st" style="left:987px;letter-spacing:0.05px">21,41 / 9,97</div>
<div class="t st" style="left:1261px;letter-spacing:-0.07px">0,00 x 0,00</div>
<div class="t st" style="left:1513px;letter-spacing:-0.7px">1:1</div>
<div class="t st" style="left:1858px;letter-spacing:-0.85px">186 %</div>

<!-- app icon & window controls -->
<svg class="a" style="left:0;top:0" width="1920" height="74" viewBox="0 0 1920 74">
<path d="M10.5 9.5 H17.5 L22.5 14 V24.5 H10.5 Z" fill="#fff" stroke="#e0b000" stroke-width="1.5"/>
<path d="M17.5 9 H22.5 V14 Z" fill="#e8b800"/>
<circle cx="14.5" cy="18" r="2.5" fill="none" stroke="#e08050" stroke-width="1"/>
<rect x="16" y="17" width="4" height="4" fill="#4aa8f0"/>
<rect x="12" y="21" width="5" height="1" fill="#e0b000"/>
<rect x="1836.5" y="17.5" width="9" height="4" rx="1" fill="#e6e6e6" stroke="#111" stroke-width="1"/>
<rect x="1868.5" y="13.5" width="7" height="7" fill="none" stroke="#111" stroke-width="2.6"/>
<rect x="1868.5" y="13.5" width="7" height="7" fill="none" stroke="#dcdcdc" stroke-width="1.4"/>
<rect x="1869.5" y="14" width="5" height="2" fill="#dcdcdc"/>
<path d="M1899.5 13.5 L1906.5 20.5 M1906.5 13.5 L1899.5 20.5" stroke="#111" stroke-width="3.6" stroke-linecap="square"/>
<path d="M1899.5 13.5 L1906.5 20.5 M1906.5 13.5 L1899.5 20.5" stroke="#e0e0e0" stroke-width="2"/>
<path d="M1898 50 L1906 58 M1906 50 L1898 58" stroke="#d8d6d0" stroke-width="1.1"/>
</svg>

<!-- scrollbars -->
<div class="a" style="left:1842px;top:546px;width:13px;height:170px;background:#3c3a36"></div>
<svg class="a" style="left:1841px;top:128px" width="15" height="992" viewBox="1841 128 15 992">
<path d="M1844.5 137.5 L1847.5 134.5 L1850.5 137.5" stroke="#f0f0f0" stroke-width="1.5" fill="none"/><rect x="1841" y="128" width="1" height="992" fill="#3a3935"/>
<path d="M1845.5 1106 L1848.5 1109 L1851.5 1106" stroke="#f0f0f0" stroke-width="1.5" fill="none"/>
</svg>
<div class="a" style="left:68px;top:1120px;width:1px;height:14px;background:#2e2d2a"></div>
<div class="a" style="left:751px;top:1120px;width:529px;height:14px;background:#3c3a36"></div>
<svg class="a" style="left:68px;top:1120px" width="1773" height="14" viewBox="68 1120 1773 14">
<path d="M76.5 1124 L73.5 1127 L76.5 1130" stroke="#f0f0f0" stroke-width="1.5" fill="none"/>
<path d="M1828.5 1124 L1831.5 1127 L1828.5 1130" stroke="#f0f0f0" stroke-width="1.5" fill="none"/>
</svg>
<!-- sidebar handle -->
<div class="a" style="left:1856px;top:612px;width:6px;height:73px;background:#8c8c8a"></div>
<svg class="a" style="left:1855px;top:630px" width="25" height="35" viewBox="1855 630 25 35">
<path d="M1856 644.5 L1861 648.5 L1856 652.5 Z" fill="#5a5854"/>
<path d="M1864.5 648.5 H1872 M1866.5 642 L1873 648.5 L1866.5 655" stroke="#101010" stroke-width="4.6" fill="none" stroke-linecap="round" stroke-linejoin="round"/>
<path d="M1864.5 648.5 H1872 M1866.5 642 L1873 648.5 L1866.5 655" stroke="#f4f6f8" stroke-width="2.6" fill="none" stroke-linecap="round" stroke-linejoin="round"/>
</svg>

<!-- tabs -->
<div class="a" style="left:224px;top:1134px;width:101px;height:36px;background:#43423d"></div>
<div class="a" style="left:224px;top:1167px;width:101px;height:3px;background:#8e8e8c"></div>
<div class="t tab" style="left:244px;letter-spacing:0.3px">Layout</div>
<div class="t tab" style="left:344px;letter-spacing:0.42px">Steuerelemente</div>
<div class="t tab" style="left:527px;letter-spacing:0.55px">Maßlinien</div>
<svg class="a" style="left:80px;top:1140px" width="140" height="25" viewBox="80 1140 140 25">
<g stroke="#8e8c86" fill="none" stroke-width="1.5">
<path d="M86.5 1145 V1158"/><path d="M95 1145.5 L89 1151.5 L95 1157.5"/>
<path d="M205.5 1145 V1158"/><path d="M197 1145.5 L203 1151.5 L197 1157.5"/>
</g>
<g fill="#8e8c86"><rect x="98" y="1151" width="1.5" height="1.5"/><rect x="193" y="1151" width="1.5" height="1.5"/>
<rect x="121" y="1146" width="2" height="11"/><path d="M128 1146 L123 1151.5 L128 1157 Z"/><path d="M134 1146 L129 1151.5 L134 1157 Z"/>
<rect x="169" y="1146" width="2" height="11"/><path d="M157 1146 L162 1151.5 L157 1157 Z"/><path d="M163 1146 L168 1151.5 L163 1157 Z"/>
</g>
</svg>

<!-- status icons -->
<svg class="a" style="left:950px;top:1171px" width="970" height="29" viewBox="950 1171 970 29">
<path d="M965.5 1175 V1181 M965.5 1184 V1189 M960 1182.5 H963.5 M967 1182.5 H972" stroke="#0000e0" stroke-width="2"/>
<g fill="#000"><rect x="973" y="1182" width="2" height="1.6"/><rect x="976" y="1182" width="2" height="1.6"/><rect x="979" y="1182" width="2" height="1.6"/><rect x="979" y="1185" width="2" height="1.6"/><rect x="979" y="1188" width="2" height="1.6"/><rect x="964" y="1191" width="2" height="1.6"/><rect x="967" y="1191" width="2" height="1.6"/><rect x="970" y="1191" width="2" height="1.6"/><rect x="973" y="1191" width="2" height="1.6"/><rect x="976" y="1191" width="2" height="1.6"/><rect x="979" y="1191" width="2" height="1.6"/></g>
<g fill="#000"><rect x="1241" y="1182" width="2" height="1.6"/><rect x="1241" y="1191" width="2" height="1.6"/><rect x="1244" y="1182" width="2" height="1.6"/><rect x="1244" y="1191" width="2" height="1.6"/><rect x="1247" y="1182" width="2" height="1.6"/><rect x="1247" y="1191" width="2" height="1.6"/><rect x="1250" y="1182" width="2" height="1.6"/><rect x="1250" y="1191" width="2" height="1.6"/><rect x="1253" y="1182" width="2" height="1.6"/><rect x="1253" y="1191" width="2" height="1.6"/><rect x="1241" y="1185" width="2" height="1.6"/><rect x="1253" y="1185" width="2" height="1.6"/><rect x="1241" y="1188" width="2" height="1.6"/><rect x="1253" y="1188" width="2" height="1.6"/></g>
<path d="M1242 1175.5 L1246 1179 M1242 1175.5 V1179.5 M1242 1175.5 H1245.5 M1255 1175.5 L1251 1179 M1255 1175.5 V1179.5 M1255 1175.5 H1251.5" stroke="#000" stroke-width="1.6"/>
<path d="M1237 1183 H1234.5 V1186.5 M1237 1191.5 H1234.5 V1188" stroke="#000" stroke-width="1.6" fill="none"/>
<rect x="1553" y="1178" width="12" height="15" fill="none" stroke="#2c2b28" stroke-width="2"/>
<path d="M1558 1187 L1561 1189.5 L1568 1183" stroke="#2c2b28" stroke-width="1.8" fill="none"/>
<path d="M1626.2 1175 V1195" stroke="#0a0a08" stroke-width="2.6"/>
<path d="M1616 1185.4 H1636.5" stroke="#0a0a08" stroke-width="1.4"/>
<path d="M1623 1179.5 L1626.2 1176 L1629.5 1179.5 M1623 1191.5 L1626.2 1195 L1629.5 1191.5" stroke="#0a0a08" stroke-width="1.8" fill="none"/>
<path d="M1620 1182 L1617 1185.4 L1620 1189 M1632.5 1182 L1635.5 1185.4 L1632.5 1189" stroke="#0a0a08" stroke-width="2.2" fill="none"/>
<rect x="1648" y="1185" width="12" height="3" fill="#2e2d2a"/>
<rect x="1664.5" y="1186" width="164" height="2" fill="#8e8c86"/>
<rect x="1713" y="1182.5" width="1.5" height="8" fill="#8e8c86"/>
<rect x="1743.5" y="1181.5" width="11" height="10.5" rx="2" fill="#fafafa"/>
<path d="M1833 1186.5 H1845 M1839 1180.5 V1192.5" stroke="#2e2d2a" stroke-width="3"/>
</svg>

</body></html>
